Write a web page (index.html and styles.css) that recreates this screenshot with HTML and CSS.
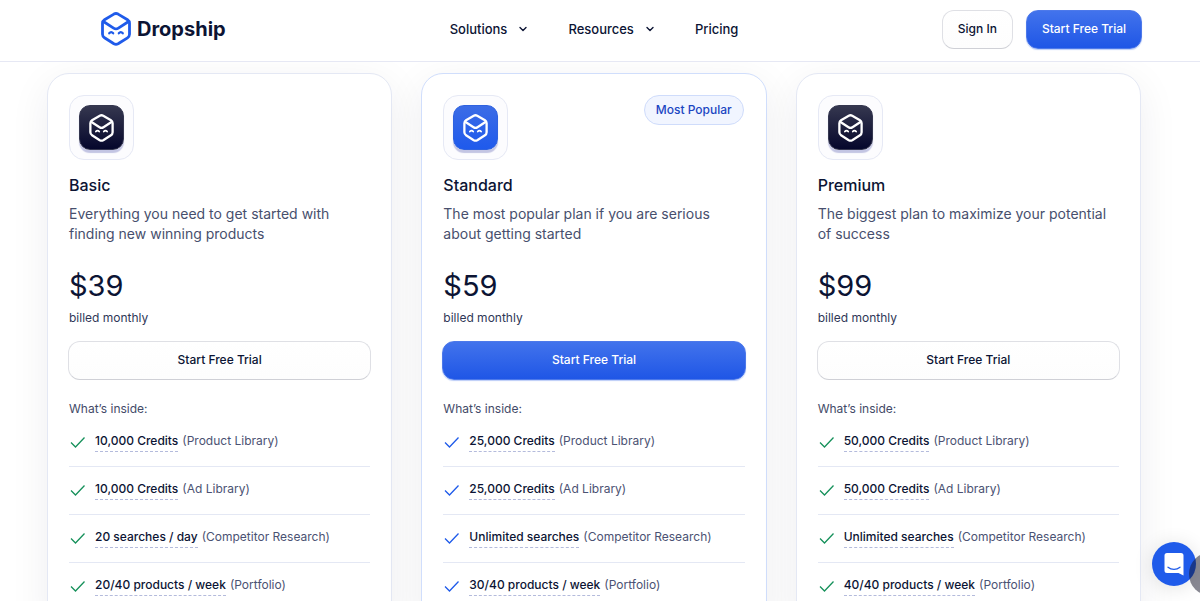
FILE: index.html
```html
<!DOCTYPE html>
<html lang="en">
<head>
    <meta charset="UTF-8">
    <meta name="viewport" content="width=device-width, initial-scale=1.0">
    <title>Dropship - Pricing</title>
    <link rel="stylesheet" href="styles.css">
</head>
<body>
    <!-- shared icons -->
    <svg class="sprite" aria-hidden="true">
        <symbol id="logo" viewBox="0 0 30 34">
            <g fill="none" stroke="currentColor" stroke-width="2.8" stroke-linecap="round" stroke-linejoin="round">
                <path d="M12.900 2.100a4.400 4.400 0 0 1 4.200 0l9.400 5.600a4.400 4.400 0 0 1 2 3.600v10.900a4.400 4.400 0 0 1-2 3.600l-9.400 6a4.400 4.400 0 0 1-4.200 0l-9.400-6a4.400 4.400 0 0 1-2-3.600V11.300a4.400 4.400 0 0 1 2-3.600z"/>
                <path d="M2.400 9.500l10.200 6.600a4.400 4.400 0 0 0 4.800 0l10.200-6.600"/>
                <path stroke-width="2.2" d="M8.200 21.300c1.200-1.500 2.800-1.500 4 0M17.800 21.300c1.200-1.500 2.800-1.500 4 0"/>
            </g>
        </symbol>
        <symbol id="check" viewBox="0 0 18 18">
            <path d="M2 9.500l4.500 4.500L15.500 4.500" fill="none" stroke="currentColor" stroke-width="1.3"/>
        </symbol>
        <symbol id="chevron" viewBox="0 0 10 10">
            <path d="M2 3.500l3 3 3-3" fill="none" stroke="currentColor" stroke-width="1.4" stroke-linecap="round" stroke-linejoin="round"/>
        </symbol>
    </svg>

    <header class="header">
        <a href="#" class="brand">
            <svg class="brand-icon"><use href="#logo"/></svg>
            <span>Dropship</span>
        </a>
        <nav class="nav">
            <button type="button" class="nav-item">Solutions <svg class="chevron"><use href="#chevron"/></svg></button>
            <button type="button" class="nav-item">Resources <svg class="chevron"><use href="#chevron"/></svg></button>
            <a href="#" class="nav-item">Pricing</a>
        </nav>
        <div class="header-actions">
            <button type="button" class="btn">Sign In</button>
            <button type="button" class="btn btn-primary">Start Free Trial</button>
        </div>
    </header>

    <main class="plans">
        <section class="card">
            <div class="plan-icon"><div class="plan-tile"><svg><use href="#logo"/></svg></div></div>
            <h2>Basic</h2>
            <p class="description">Everything you need to get started with finding new winning products</p>
            <div class="price">$39</div>
            <p class="billed">billed monthly</p>
            <button type="button" class="btn btn-block">Start Free Trial</button>
            <p class="inside">What’s inside:</p>
            <ul class="features">
                <li><svg class="check"><use href="#check"/></svg><b>10,000 Credits</b> (Product Library)</li>
                <li><svg class="check"><use href="#check"/></svg><b>10,000 Credits</b> (Ad Library)</li>
                <li><svg class="check"><use href="#check"/></svg><b>20 searches / day</b> (Competitor Research)</li>
                <li><svg class="check"><use href="#check"/></svg><b>20/40 products / week</b> (Portfolio)</li>
            </ul>
        </section>

        <section class="card card-popular">
            <span class="badge">Most Popular</span>
            <div class="plan-icon"><div class="plan-tile"><svg><use href="#logo"/></svg></div></div>
            <h2>Standard</h2>
            <p class="description">The most popular plan if you are serious about getting started</p>
            <div class="price">$59</div>
            <p class="billed">billed monthly</p>
            <button type="button" class="btn btn-primary btn-block">Start Free Trial</button>
            <p class="inside">What’s inside:</p>
            <ul class="features">
                <li><svg class="check"><use href="#check"/></svg><b>25,000 Credits</b> (Product Library)</li>
                <li><svg class="check"><use href="#check"/></svg><b>25,000 Credits</b> (Ad Library)</li>
                <li><svg class="check"><use href="#check"/></svg><b>Unlimited searches</b> (Competitor Research)</li>
                <li><svg class="check"><use href="#check"/></svg><b>30/40 products / week</b> (Portfolio)</li>
            </ul>
        </section>

        <section class="card">
            <div class="plan-icon"><div class="plan-tile"><svg><use href="#logo"/></svg></div></div>
            <h2>Premium</h2>
            <p class="description">The biggest plan to maximize your potential of success</p>
            <div class="price">$99</div>
            <p class="billed">billed monthly</p>
            <button type="button" class="btn btn-block">Start Free Trial</button>
            <p class="inside">What’s inside:</p>
            <ul class="features">
                <li><svg class="check"><use href="#check"/></svg><b>50,000 Credits</b> (Product Library)</li>
                <li><svg class="check"><use href="#check"/></svg><b>50,000 Credits</b> (Ad Library)</li>
                <li><svg class="check"><use href="#check"/></svg><b>Unlimited searches</b> (Competitor Research)</li>
                <li><svg class="check"><use href="#check"/></svg><b>40/40 products / week</b> (Portfolio)</li>
            </ul>
        </section>
    </main>

    <button type="button" class="chat" aria-label="Open chat">
        <svg viewBox="0 0 20 23">
            <path d="M3 0h14a2.500 2.500 0 0 1 2.500 2.500V22.500L14.500 20H3A2.500 2.500 0 0 1 .5 17.500v-15A2.500 2.500 0 0 1 3 0z" fill="#fff"/>
            <path d="M4 14.200c3.500 2.800 8.500 2.800 12 0" fill="none" stroke="#1f5bea" stroke-width="1.3" stroke-linecap="round"/>
        </svg>
    </button>
    <div class="scroll-dot"></div>
</body>
</html>
```
FILE: styles.css
```css
* {
    box-sizing: border-box;
}

body {
    margin: 0;
    font-family: 'Inter', sans-serif;
    font-size: 12px;
    line-height: 20px;
    color: #0c1434;
    background: #fff;
    overflow-x: hidden;
}

h2, p, ul {
    margin: 0;
    padding: 0;
}

button {
    font: inherit;
    color: inherit;
    cursor: pointer;
}

a {
    color: inherit;
    text-decoration: none;
}

.sprite {
    position: absolute;
    width: 0;
    height: 0;
}

/* Header */
.header {
    position: sticky;
    top: 0;
    z-index: 2;
    display: grid;
    grid-template-columns: 1fr auto 1fr;
    align-items: center;
    height: 62px;
    padding: 0 58px 3px 46px;
    background: #fff;
    border-bottom: 1px solid #e6e8f4;
}

.brand {
    display: flex;
    align-items: center;
    gap: 6px;
    margin-left: 55px;
    font-size: 20px;
    font-weight: 700;
}

.brand-icon {
    width: 30px;
    height: 34px;
    color: #1f5bea;
}

.nav {
    display: flex;
    align-items: center;
    gap: 40px;
}

.nav-item {
    display: flex;
    align-items: center;
    gap: 11px;
    padding: 0;
    border: 0;
    background: none;
    font-size: 13px;
    font-weight: 500;
}

.chevron {
    width: 10px;
    height: 10px;
}

.header-actions {
    display: flex;
    justify-content: flex-end;
    gap: 13px;
}

.btn {
    height: 39px;
    padding: 0 15px 1px;
    border: 1px solid #dfe0e5;
    border-bottom-color: #cfd0d6;
    border-radius: 12px;
    background: linear-gradient(#fff, #fdfdfd);
    font-weight: 500;
}

.btn-primary {
    color: #fff;
    border-color: #4d79ea;
    background: linear-gradient(#4273ec, #1f56e6);
    box-shadow: 0 1px 1px rgba(31, 86, 230, 0.3);
}

.btn-block {
    display: block;
    width: calc(100% + 2px);
    margin: 13px -1px 0;
}

/* Plans */
.plans {
    display: grid;
    grid-template-columns: repeat(3, 1fr);
    gap: 29px;
    padding: 11px 59px 40px 47px;
}

.card {
    position: relative;
    padding: 21px;
    border: 1px solid #e4e8f4;
    border-radius: 22px;
    background: #fff;
    box-shadow: 0 10px 40px rgba(20, 30, 60, 0.07);
}

.card-popular {
    border-color: #d0defc;
}

.badge {
    position: absolute;
    top: 21px;
    right: 22px;
    padding: 4px 11px;
    border: 1px solid #cfdcfb;
    border-radius: 15px;
    background: #f1f5ff;
    color: #1b46c2;
    font-weight: 500;
}

.plan-icon {
    display: flex;
    align-items: center;
    justify-content: center;
    width: 65px;
    height: 65px;
    border: 1px solid #e6e9f5;
    border-radius: 15px;
    background: #fcfcfe;
}

.plan-tile {
    display: flex;
    align-items: center;
    justify-content: center;
    width: 45px;
    height: 45px;
    border: 1px solid #34364f;
    border-radius: 11px;
    background: linear-gradient(#35374f, #05072c);
    box-shadow: 0 3px 1px #c3c5e3;
    color: #fff;
}

.plan-tile svg {
    width: 25px;
    height: 28px;
}

.card-popular .plan-tile {
    border-color: #2e62e0;
    background: linear-gradient(#3b6ce6, #1f5aec);
}

h2 {
    margin-top: 13px;
    font-size: 16px;
    font-weight: 500;
    line-height: 24px;
}

.description {
    margin-top: 7px;
    font-size: 14px;
    color: #474f6d;
}

.price {
    margin-top: 22px;
    font-size: 29px;
    font-weight: 400;
    line-height: 40px;
}

.billed {
    margin-top: 2px;
    color: #2f3757;
}

.inside {
    margin-top: 19px;
    color: #434a68;
}

.features {
    list-style: none;
}

.features li {
    display: flex;
    gap: 4px;
    padding: 12px 0 14px;
    border-bottom: 1px solid #e4e8f4;
    color: #4b5273;
}

.features b {
    border-bottom: 1px dashed #b4bbdc;
    color: #0c1434;
    font-weight: 500;
}

.check {
    width: 18px;
    height: 18px;
    margin: 2px 4px 0 0;
    color: #16915b;
}

.card-popular .check {
    color: #1f5bea;
}

/* Floating widgets */
.chat {
    position: fixed;
    right: 4px;
    bottom: 15px;
    z-index: 3;
    display: flex;
    align-items: center;
    justify-content: center;
    width: 44px;
    height: 44px;
    padding: 0;
    border: 0;
    border-radius: 50%;
    background: #1f5bea;
    box-shadow: 0 2px 20px rgba(0, 0, 0, 0.12);
}

.chat svg {
    width: 20px;
    height: 23px;
}

.scroll-dot {
    position: fixed;
    right: -33px;
    bottom: 5px;
    z-index: 4;
    width: 44px;
    height: 44px;
    border-radius: 50%;
    background: rgba(20, 20, 40, 0.5);
}
```
